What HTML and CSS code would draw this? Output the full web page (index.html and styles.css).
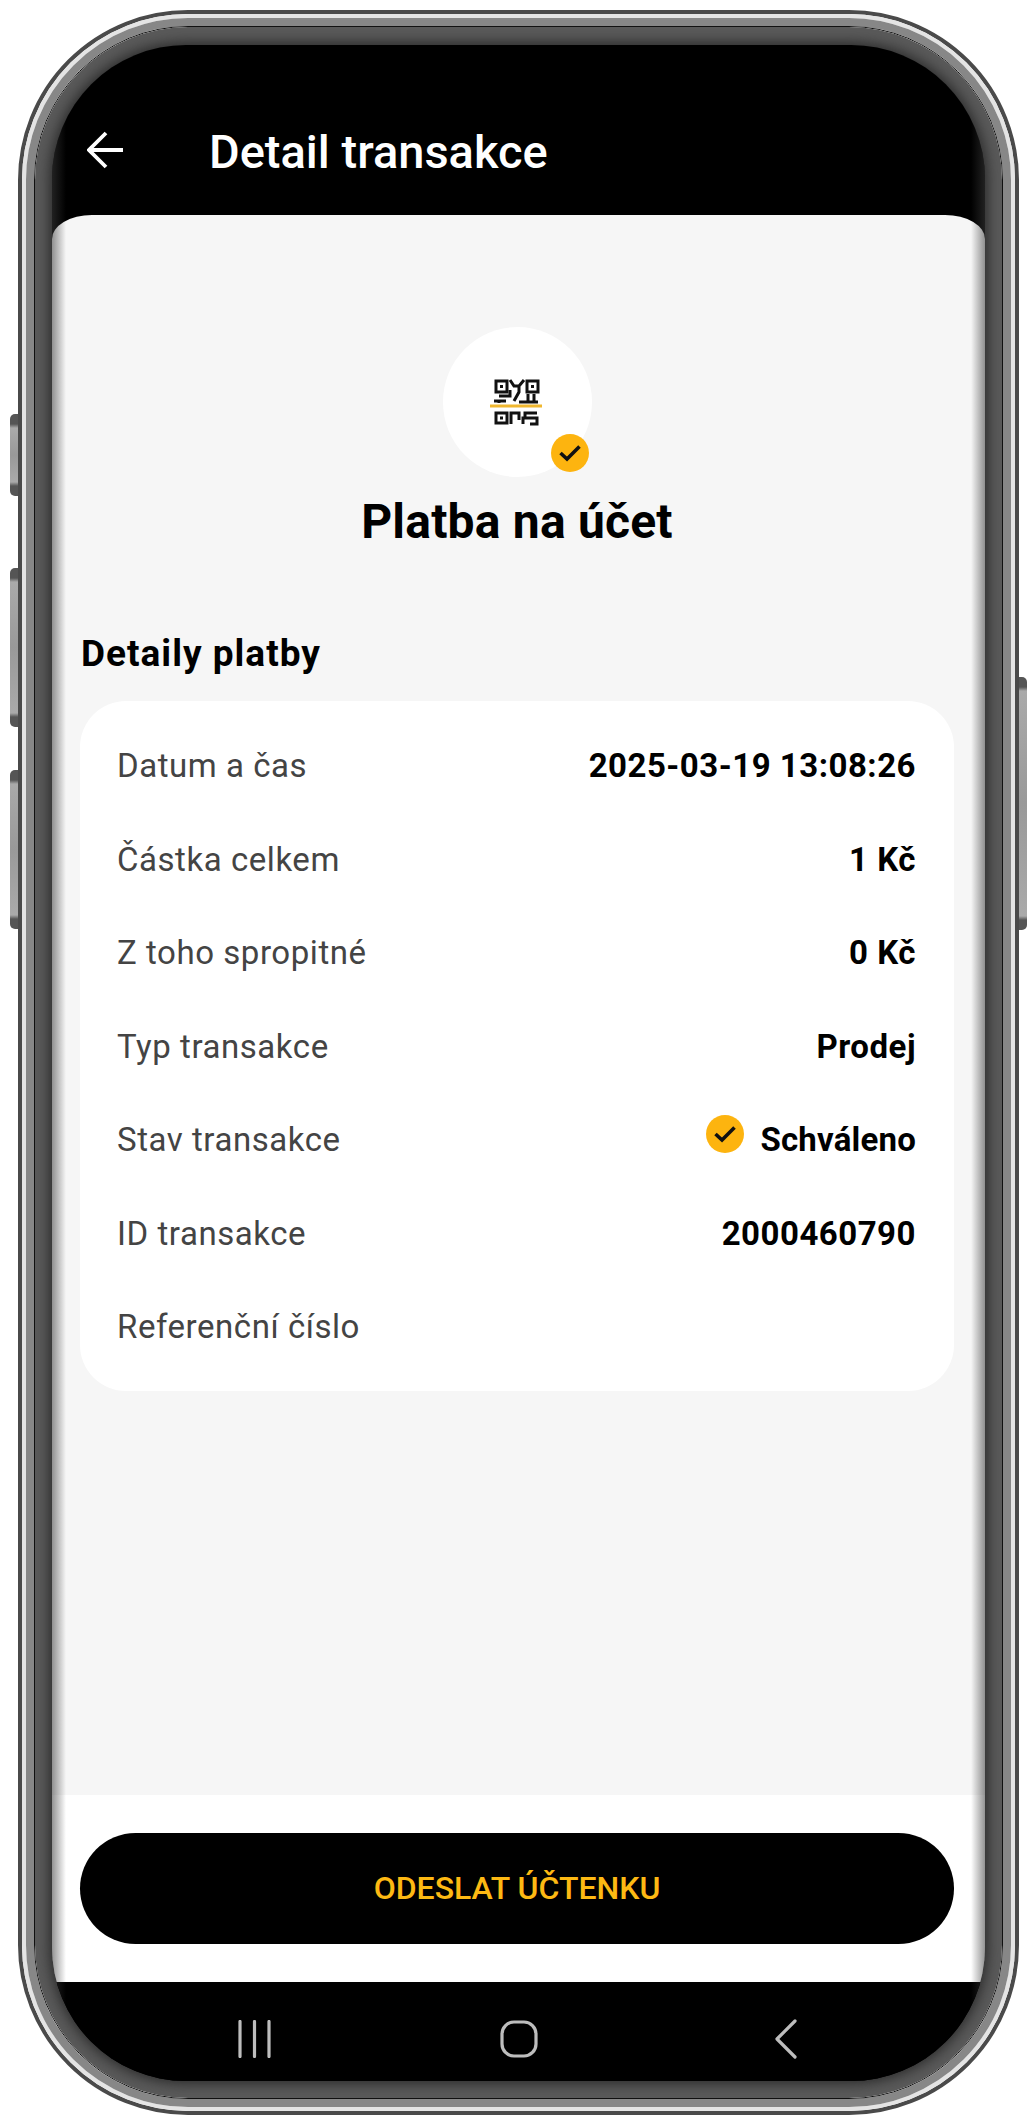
FILE: index.html
```html
<!DOCTYPE html>
<html lang="en">

<head>
    <title>Detail transakce</title>
    <link rel="stylesheet" href="styles.css">
</head>

<body>
    <div class="phone">
        <div class="side-btn side-btn-1"></div>
        <div class="side-btn side-btn-2"></div>
        <div class="side-btn side-btn-3"></div>
        <div class="side-btn side-btn-4"></div>
        <div class="ring-light">
            <div class="ring-gray">
                <div class="ring-line">
                    <div class="bezel">
                        <div class="screen">
                            <header class="topbar">
                                <svg class="back-icon" width="38" height="38" viewBox="0 0 38 38">
                                    <path d="M36 19H2M19 2L2 19L19 36" fill="none" stroke="#fff" stroke-width="3.8" />
                                </svg>
                                <h1>Detail transakce</h1>
                            </header>

                            <main class="sheet">
                                <div class="hero">
                                    <div class="hero-circle">
                                        <svg class="qr-icon" width="54" height="50" viewBox="0 0 54 50">
                                            <g fill="none" stroke="#111" stroke-width="3">
                                                <rect x="6" y="4" width="11" height="11" />
                                                <rect x="37" y="4" width="11" height="11" />
                                                <rect x="6" y="36" width="11" height="10" />
                                                <path d="M20 3L24 9H29M34 3L29 9V15L24 24M4 24H16M9 24V26M9 19H20V13" />
                                                <path d="M38 17V24M44 17V24M29 25H48" />
                                                <path d="M21 47V36H29V43M33 47V41H47V47H40M35 41V36H47" />
                                            </g>
                                            <rect x="10" y="8" width="3" height="3" fill="#111" />
                                            <rect x="41" y="8" width="3" height="3" fill="#111" />
                                            <rect x="10" y="39.500" width="3" height="3" fill="#111" />
                                            <rect x="0" y="27.500" width="52" height="3" fill="#f0b72f" />
                                        </svg>
                                        <span class="check check-badge">
                                            <svg width="22" height="22" viewBox="0 0 22 22">
                                                <path d="M1.500 11L8 17L20.500 4.500" fill="none" stroke="#111" stroke-width="3.600" />
                                            </svg>
                                        </span>
                                    </div>
                                    <h2>Platba na účet</h2>
                                </div>

                                <h3>Detaily platby</h3>
                                <div class="card">
                                    <div class="row">
                                        <span class="label">Datum a čas</span>
                                        <span class="value">2025-03-19 13:08:26</span>
                                    </div>
                                    <div class="row">
                                        <span class="label">Částka celkem</span>
                                        <span class="value">1 Kč</span>
                                    </div>
                                    <div class="row">
                                        <span class="label">Z toho spropitné</span>
                                        <span class="value">0 Kč</span>
                                    </div>
                                    <div class="row">
                                        <span class="label">Typ transakce</span>
                                        <span class="value">Prodej</span>
                                    </div>
                                    <div class="row">
                                        <span class="label">Stav transakce</span>
                                        <span class="value status">
                                            <span class="check check-status">
                                                <svg width="22" height="22" viewBox="0 0 22 22">
                                                    <path d="M1.500 11L8 17L20.500 4.500" fill="none" stroke="#111" stroke-width="3.600" />
                                                </svg>
                                            </span>
                                            Schváleno
                                        </span>
                                    </div>
                                    <div class="row">
                                        <span class="label">ID transakce</span>
                                        <span class="value">2000460790</span>
                                    </div>
                                    <div class="row">
                                        <span class="label">Referenční číslo</span>
                                    </div>
                                </div>
                            </main>

                            <div class="footer">
                                <button type="button" class="send-btn">ODESLAT ÚČTENKU</button>
                            </div>

                            <nav class="navbar">
                                <svg width="34" height="38" viewBox="0 0 34 38">
                                    <path d="M3 1.500V36.500M17.500 1.500V36.500M32 1.500V36.500" fill="none" stroke="#bdbdbd" stroke-width="3.200" stroke-linecap="round" />
                                </svg>
                                <svg class="nav-home" width="38" height="38" viewBox="0 0 38 38">
                                    <rect x="2" y="2" width="34" height="34" rx="12" fill="none" stroke="#bdbdbd" stroke-width="3.200" />
                                </svg>
                                <svg width="24" height="40" viewBox="0 0 24 40">
                                    <path d="M21 2L3 20L21 38" fill="none" stroke="#bdbdbd" stroke-width="3.200" stroke-linecap="round" stroke-linejoin="round" />
                                </svg>
                            </nav>
                            <div class="edge-shade"></div>
                        </div>
                    </div>
                </div>
            </div>
        </div>
    </div>
</body>

</html>
```

FILE: styles.css
```css
* {
    box-sizing: border-box;
}

body {
    margin: 0;
    background-color: #fff;
    font-family: Roboto, "Liberation Sans", sans-serif;
}

/* phone frame */
.phone {
    position: relative;
    width: 1001px;
    height: 2105px;
    margin: 10px 0 0 18px;
    border: 4px solid #4a4a4a;
    border-radius: 170px;
}

.ring-light {
    height: 100%;
    border: 4px solid #e4e4e4;
    border-radius: 166px;
}

.ring-gray {
    height: 100%;
    border: 8px solid #878787;
    border-radius: 162px;
}

.ring-line {
    height: 100%;
    border: 1px solid #111;
    border-radius: 154px;
}

.bezel {
    height: 100%;
    padding: 18px 17px 17px;
    background-color: #5a5a5a;
    border-radius: 153px;
}

.screen {
    position: relative;
    display: flex;
    flex-direction: column;
    height: 100%;
    overflow: hidden;
    background-color: #000;
    border-radius: 134px;
    box-shadow: 0 0 14px 2px #262626;
}

.side-btn {
    position: absolute;
    width: 8px;
    background: linear-gradient(to bottom, #555 0, #555 10px, #aaa 14px, #999 50%, #aaa calc(100% - 14px), #555 calc(100% - 10px), #555 100%);
}

.side-btn-1 {
    top: 400px;
    left: -12px;
    height: 82px;
    border-radius: 5px 0 0 5px;
}

.side-btn-2 {
    top: 554px;
    left: -12px;
    height: 159px;
    border-radius: 5px 0 0 5px;
}

.side-btn-3 {
    top: 756px;
    left: -12px;
    height: 159px;
    border-radius: 5px 0 0 5px;
}

.side-btn-4 {
    top: 663px;
    right: -12px;
    height: 253px;
    border-radius: 0 5px 5px 0;
}

.edge-shade {
    position: absolute;
    top: 0;
    bottom: 0;
    left: 0;
    right: 0;
    pointer-events: none;
    background:
        linear-gradient(to right, rgba(60, 60, 60, .55), rgba(60, 60, 60, 0) 14px),
        linear-gradient(to left, rgba(60, 60, 60, .55), rgba(60, 60, 60, 0) 14px);
}

/* top bar */
.topbar {
    display: flex;
    align-items: center;
    flex-shrink: 0;
    height: 170px;
    padding: 42px 0 0 35px;
}

.back-icon {
    margin-top: -3px;
}

.topbar h1 {
    margin: 0 0 0 84px;
    color: #fff;
    font-size: 47px;
    font-weight: 500;
}

/* content */
.sheet {
    flex: 1;
    padding: 0 31px 0 28px;
    background-color: #f6f6f6;
    border-radius: 40px 40px 0 0 / 24px 24px 0 0;
}

.hero {
    display: flex;
    flex-direction: column;
    align-items: center;
    padding-top: 112px;
}

.hero-circle {
    position: relative;
    display: flex;
    align-items: center;
    justify-content: center;
    width: 149px;
    height: 150px;
    background-color: #fff;
    border-radius: 50%;
}

.check {
    display: flex;
    align-items: center;
    justify-content: center;
    width: 38px;
    height: 38px;
    background-color: #fdb40f;
    border-radius: 50%;
}

.check-badge {
    position: absolute;
    top: 107px;
    left: 108px;
}

.hero h2 {
    margin: 18px 0 0;
    color: #000;
    font-size: 48px;
    font-weight: 700;
    line-height: 54px;
    letter-spacing: .2px;
}

.sheet h3 {
    margin: 83px 0 0 1px;
    color: #000;
    font-size: 37px;
    font-weight: 700;
    line-height: 44px;
    letter-spacing: 1px;
}

.card {
    margin-top: 25px;
    padding: 18px 38px 17px;
    background-color: #fff;
    border-radius: 46px;
}

.row {
    display: flex;
    align-items: center;
    justify-content: space-between;
    height: 93.5px;
}

.label {
    margin-left: -1px;
    color: #444;
    font-size: 33px;
    letter-spacing: .55px;
}

.value {
    color: #000;
    font-size: 33px;
    font-weight: 700;
    letter-spacing: .5px;
}

.status {
    display: flex;
    align-items: center;
    gap: 16px;
    letter-spacing: .2px;
}

.check-status {
    margin-top: -12px;
}

/* button */
.footer {
    flex-shrink: 0;
    height: 187px;
    padding: 38px 31px 0 28px;
    background-color: #fff;
}

.send-btn {
    display: block;
    width: 100%;
    height: 111px;
    padding-bottom: 2px;
    border: none;
    border-radius: 56px;
    background-color: #000;
    color: #fdb913;
    font-family: Roboto, "Liberation Sans", sans-serif;
    font-size: 32px;
    font-weight: 500;
}

/* android nav */
.navbar {
    display: flex;
    align-items: center;
    justify-content: space-between;
    flex-shrink: 0;
    height: 99px;
    padding: 14px 187px 0 185px;
    background-color: #000;
}

.nav-home {
    margin-right: 7px;
}
```
